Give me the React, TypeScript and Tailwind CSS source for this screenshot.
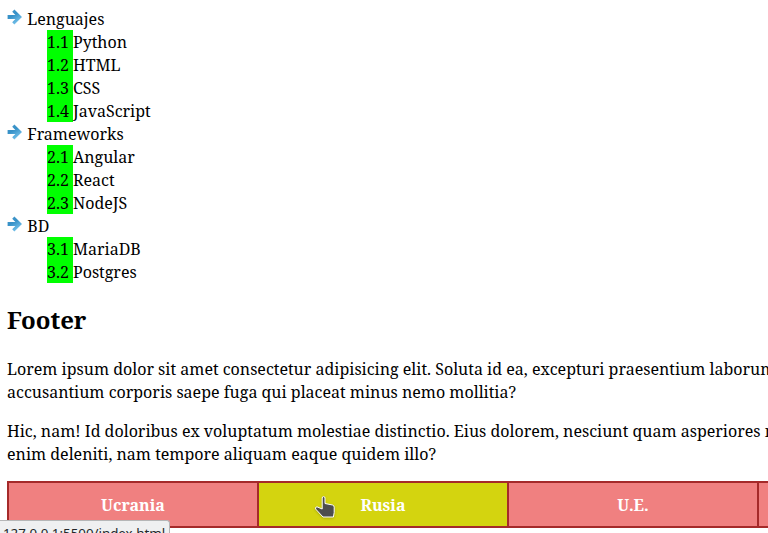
const groups = [
  { title: "Lenguajes", items: ["Python", "HTML", "CSS", "JavaScript"] },
  { title: "Frameworks", items: ["Angular", "React", "NodeJS"] },
  { title: "BD", items: ["MariaDB", "Postgres"] },
];

function Arrow() {
  return (
    <svg className="mt-[2px] h-4 w-4 shrink-0" viewBox="0 0 16 16">
      <defs>
        <linearGradient id="arrow" x1="0" y1="0" x2="0.6" y2="1">
          <stop offset="0" stopColor="#4a9acb" />
          <stop offset="0.45" stopColor="#3590c7" />
          <stop offset="1" stopColor="#78c4ec" />
        </linearGradient>
      </defs>
      <path d="M0.6 6H8.4L5.2 2.7L7.4 0.5L15 8L7.4 15.4L5.2 13.2L8.4 10H0.6Z" fill="url(#arrow)" />
    </svg>
  );
}

function Pointer() {
  return (
    <svg className="absolute left-[55px] top-[12px] h-[26px] w-[24px] drop-shadow-[0_1px_1px_rgba(0,0,0,0.2)]" viewBox="0 0 24 26">
      <path
        d="M8.2 3Q8.2 1.6 9.6 1.6Q11 1.6 11 3V8.5L18.5 10Q20.2 10.4 20.2 12.2V17.5L19.4 22H9L1.6 14Q1 12 3 11.8L8.2 14Z"
        fill="#4d4d4d" stroke="white" strokeWidth="1" strokeLinejoin="round"
      />
    </svg>
  );
}

export default function App() {
  return (
    <div className="relative h-[533px] w-[768px] overflow-hidden bg-white pl-[7px] pt-[7px] font-['Noto_Serif','DejaVu_Serif',serif] text-[16px] leading-[23px] text-black">
      <ul>
        {groups.map((g, i) => (
          <li key={g.title}>
            <div className="flex h-[23px] gap-[4.2px]">
              <Arrow />
              <span className="mt-px">{g.title}</span>
            </div>
            <ol className="pl-10">
              {g.items.map((item, j) => (
                <li key={item} className="flex h-[23px]">
                  <span className="w-[26px] bg-[#00ff00] pt-px whitespace-nowrap">{i + 1}.{j + 1}</span>
                  <span className="mt-px">{item}</span>
                </li>
              ))}
            </ol>
          </li>
        ))}
      </ul>
      <h2 className="mt-[19px] text-[24px] font-bold leading-[35px]">Footer</h2>
      <p className="mt-[21px] whitespace-nowrap">
        Lorem ipsum dolor sit amet consectetur adipisicing elit. Soluta id ea, excepturi praesentium laborum
        <br />
        accusantium corporis saepe fuga qui placeat minus nemo mollitia?
      </p>
      <p className="mt-4 whitespace-nowrap">
        Hic, nam! Id doloribus ex voluptatum molestiae distinctio. Eius dolorem, nesciunt quam asperiores n
        <br />
        enim deleniti, nam tempore aliquam eaque quidem illo?
      </p>
      <nav className="mt-[15px] flex h-[47px] w-[1002px] border-2 border-[#a52a2a] text-center font-bold leading-[45px] text-white">
        <a className="h-[43px] w-[250px] shrink-0 border-r-2 border-[#a52a2a] bg-[#f08080]">Ucrania</a>
        <a className="relative h-[43px] w-[250px] shrink-0 border-r-2 border-[#a52a2a] bg-[#d4d40f]">Rusia<Pointer /></a>
        <a className="h-[43px] w-[250px] shrink-0 border-r-2 border-[#a52a2a] bg-[#f08080]">U.E.</a>
        <a className="h-[43px] w-[250px] shrink-0 bg-[#f08080]" />
      </nav>
      <div className="absolute left-0 top-[520px] h-5 w-[170px] rounded-tr-[3px] border-r border-t border-[#b5b6b7] bg-[#eff0f1] pl-[3px] pt-[2px] font-['Noto_Sans',sans-serif] text-[13.33px] leading-[20px] text-[#232629] whitespace-nowrap">
        127.0.0.1:5500/index.html
      </div>
    </div>
  );
}
